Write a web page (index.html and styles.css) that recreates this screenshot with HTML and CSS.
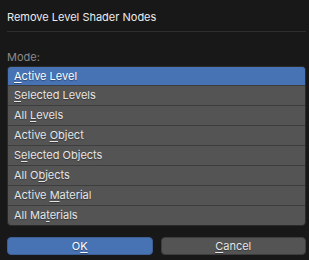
FILE: index.html
```html
<!DOCTYPE html>
<html>
<head>
<meta charset="utf-8">
<link rel="stylesheet" href="styles.css">
</head>
<body>
<div class="dialog">
  <div class="title">Remove Level Shader Nodes</div>
  <div class="sep"></div>
  <div class="label">Mode:</div>
  <div class="list">
    <div class="row active"><u>A</u>ctive Level</div>
    <div class="row"><u>S</u>elected Levels</div>
    <div class="row">All <u>L</u>evels</div>
    <div class="row">Active <u>O</u>bject</div>
    <div class="row">S<u>e</u>lected Objects</div>
    <div class="row">All O<u>b</u>jects</div>
    <div class="row">Active <u>M</u>aterial</div>
    <div class="row">All Ma<u>t</u>erials</div>
  </div>
  <div class="buttons">
    <div class="btn primary">O<u>K</u></div>
    <div class="btn"><u>C</u>ancel</div>
  </div>
</div>
</body>
</html>
```
FILE: styles.css
```css
html, body {
  margin: 0;
  padding: 0;
  background: #181818;
}
body {
  font-family: Inter, "DejaVu Sans", sans-serif;
  font-size: 11px;
  color: #e6e6e6;
  width: 309px;
  height: 260px;
  overflow: hidden;
}
.dialog {
  padding: 0 3px 0 7px;
  display: flex;
  flex-direction: column;
}
.title {
  padding-top: 10px;
  line-height: 14px;
  height: 21px;
  font-size: 11px;
  color: #ececec;
}
.sep {
  height: 1px;
  background: #2e2e2e;
}
.label {
  margin-top: 18px;
  line-height: 14px;
  height: 16px;
  color: #8a8a8a;
}
.list {
  border: 1px solid #2a2a2a;
  border-radius: 4px;
  overflow: hidden;
  background: #545454;
}
.row {
  height: 19px;
  line-height: 19px;
  padding-left: 6px;
  border-top: 1px solid #3d3d3d;
  color: #e6e6e6;
  text-shadow: 0 1px 1px rgba(0,0,0,0.35);
}
.row:first-child {
  border-top: none;
  height: 18px;
  line-height: 18px;
}
.row.active {
  background: #4772b3;
  color: #ffffff;
}
u {
  text-decoration: underline;
  text-underline-offset: 2px;
  text-decoration-thickness: 1px;
}
.buttons {
  display: flex;
  gap: 8px;
  margin-top: 11px;
}
.btn {
  flex: 1;
  height: 16px;
  line-height: 16px;
  text-align: center;
  background: #545454;
  border: 1px solid #3d3d3d;
  border-radius: 4px;
  color: #e6e6e6;
  text-shadow: 0 1px 1px rgba(0,0,0,0.35);
}
.btn.primary {
  background: #4772b3;
  border-color: #3d5f94;
  color: #ffffff;
}
```
